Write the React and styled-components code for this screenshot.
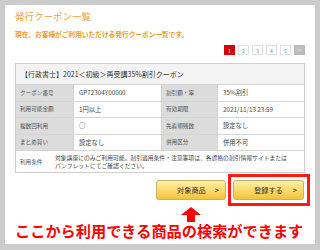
import styled, { createGlobalStyle } from "styled-components";

const GlobalStyle = createGlobalStyle`
    html, body {
        margin: 0;
        padding: 0;
        background: #cccccc;
    }
    body {
        font-family: "Noto Sans CJK JP", "Noto Sans", sans-serif;
        color: #333;
    }
`;

const Panel = styled.div`
    box-sizing: border-box;
    width: 310px;
    height: 239px;
    margin: 5px 0 0 5px;
    background: #fff;
    padding: 5px 10px 0 10px;
    display: flex;
    flex-direction: column;
`;

const Title = styled.h1`
    margin: 0;
    font-size: 9.5px;
    line-height: 12px;
    font-weight: 400;
    color: #f5a13a;
`;

const Lead = styled.p`
    margin: 7px 0 0;
    font-size: 6.7px;
    line-height: 10px;
    font-weight: 700;
    color: #f39a26;
`;

const Pager = styled.div`
    display: flex;
    justify-content: flex-end;
    gap: 3px;
    margin-top: 6px;
`;

const PageBox = styled.span`
    box-sizing: border-box;
    width: 11px;
    height: 10px;
    display: flex;
    align-items: center;
    justify-content: center;
    overflow: hidden;
    font-size: ${(p) => (p.next ? "4.5px" : "5px")};
    letter-spacing: ${(p) => (p.next ? "-0.3px" : "0")};
    line-height: 1;
    border: 1px solid ${(p) => (p.active ? "#d40000" : p.next ? "#b8b8b8" : "#e0e0e0")};
    background: ${(p) => (p.active ? "#d40000" : p.next ? "#bdbdbd" : "#fff")};
    color: ${(p) => (p.active ? "#fff" : p.next ? "#e8f0f8" : "#4a8cc8")};
`;

const Table = styled.div`
    margin-top: 8px;
    border: 1px solid #cfcfcf;
    color: #444;
`;

const TableHead = styled.div`
    height: 20px;
    display: flex;
    align-items: center;
    padding-left: 5px;
    background: #f3f3f3;
    font-size: 7px;
    color: #333;
`;

const Row = styled.div`
    display: grid;
    grid-template-columns: 57px 88px 56px 1fr;
    height: 15.5px;
    border-top: 1px solid #d4d4d4;
`;

const Cell = styled.div`
    display: flex;
    align-items: center;
    padding-left: ${(p) => (p.label ? "4px" : "5px")};
    background: ${(p) => (p.label ? "#dcdcdc" : "#fff")};
    border-left: ${(p) => (p.first ? "none" : "1px solid #d4d4d4")};
    font-size: ${(p) => (p.label ? "5.6px" : "6.3px")};
    color: ${(p) => (p.label ? "#555" : "#444")};
    white-space: nowrap;
`;

const TermsRow = styled.div`
    display: flex;
    align-items: center;
    height: 21px;
    border-top: 1px solid #d4d4d4;
    padding-left: 4px;
`;

const TermsLabel = styled.div`
    width: 35px;
    flex-shrink: 0;
    font-size: 5.6px;
    color: #555;
`;

const TermsText = styled.div`
    font-size: 5.8px;
    line-height: 8px;
    color: #444;
    white-space: nowrap;
`;

const ButtonRow = styled.div`
    display: flex;
    justify-content: flex-end;
    align-items: flex-start;
    gap: 7px;
    margin-top: 7px;
    padding-right: 1px;
`;

const ButtonGroup = styled.div`
    display: flex;
    flex-direction: column;
    align-items: center;
`;

const Button = styled.button`
    position: relative;
    box-sizing: border-box;
    width: ${(p) => p.w}px;
    height: 20px;
    display: flex;
    align-items: center;
    justify-content: space-between;
    padding: 0 6px 0 20px;
    border: 1px solid #c9b06a;
    border-radius: 3px;
    background: linear-gradient(#fff0a8, #fbd866 55%, #f4c23e);
    font-family: "Noto Sans CJK JP", sans-serif;
    font-size: 7.2px;
    color: #333;

    ${(p) =>
        p.marked &&
        `
        &::after {
            content: "";
            position: absolute;
            left: -6px;
            right: -7px;
            top: -7px;
            bottom: -7px;
            border: 3px solid #ff1a1a;
        }
    `}
`;

const Chevron = styled.span`
    font-size: 7px;
    font-weight: 700;
    color: #333;
`;

const Arrow = styled.svg`
    display: block;
    margin-top: 7px;
`;

const Notice = styled.p`
    margin: 0;
    font-size: 15.2px;
    line-height: 16px;
    font-weight: 700;
    color: #ff0000;
    white-space: nowrap;
`;

const rows = [
    ["クーポン番号", "GP72304Y00000", "割引額・率", "35%割引"],
    ["利用可能金額", "1円以上", "有効期限", "2021/11/13 23:59"],
    ["複数回利用", "○", "先着順残数", "設定なし"],
    ["まとめ買い", "設定なし", "併用区分", "併用不可"],
];

export default function App() {
    return (
        <>
            <GlobalStyle />
            <Panel>
                <Title>発行クーポン一覧</Title>
                <Lead>現在、お客様がご利用いただける発行クーポン一覧です。</Lead>
                <Pager>
                    <PageBox active>1</PageBox>
                    <PageBox>2</PageBox>
                    <PageBox>3</PageBox>
                    <PageBox>4</PageBox>
                    <PageBox>5</PageBox>
                    <PageBox next>&gt;&gt;</PageBox>
                </Pager>
                <Table>
                    <TableHead>【行政書士】2021＜初級＞再受講35%割引クーポン</TableHead>
                    {rows.map((r) => (
                        <Row key={r[0]}>
                            <Cell label first>{r[0]}</Cell>
                            <Cell>{r[1]}</Cell>
                            <Cell label>{r[2]}</Cell>
                            <Cell>{r[3]}</Cell>
                        </Row>
                    ))}
                    <TermsRow>
                        <TermsLabel>利用条件</TermsLabel>
                        <TermsText>
                            対象講座にのみご利用可能。割引適用条件・注意事項は、各資格の割引情報サイトまたは
                            <br />
                            パンフレットにてご確認ください。
                        </TermsText>
                    </TermsRow>
                </Table>
                <ButtonRow>
                    <ButtonGroup>
                        <Button w={70}>
                            <span>対象商品</span>
                            <Chevron>&gt;</Chevron>
                        </Button>
                        <Arrow width="20" height="15" viewBox="0 0 20 15">
                            <polygon points="10,0 20,8 14,8 14,15 6,15 6,8 0,8" fill="#ff0000" />
                        </Arrow>
                    </ButtonGroup>
                    <Button w={71} marked>
                        <span>登録する</span>
                        <Chevron>&gt;</Chevron>
                    </Button>
                </ButtonRow>
                <Notice>ここから利用できる商品の検索ができます</Notice>
            </Panel>
        </>
    );
}
